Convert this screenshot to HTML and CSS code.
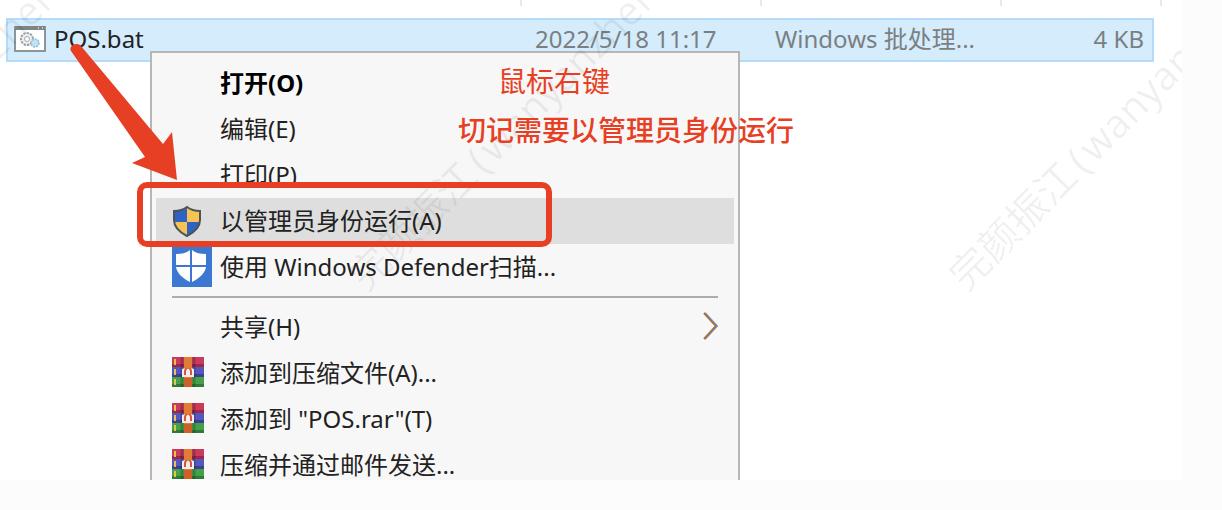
FILE: index.html
```html
<!DOCTYPE html>
<html lang="zh-CN">
<head>
<meta charset="utf-8">
<title>POS.bat</title>
<link rel="stylesheet" href="styles.css">
</head>
<body>
<svg class="defs" aria-hidden="true">
  <symbol id="rar" viewBox="0 0 32 32">
    <rect width="32" height="10" fill="#c93a5c"/><rect y="7" width="32" height="3" fill="#9c2846"/>
    <rect y="10" width="32" height="10" fill="#5457bd"/><rect y="17" width="32" height="3" fill="#3d3f92"/>
    <rect y="20" width="32" height="10" fill="#46a04a"/><rect y="27" width="32" height="3" fill="#317a36"/>
    <path d="M10 0v30M22 0v30" stroke="#000" stroke-opacity=".2" stroke-width="3"/>
    <path d="M3 2v6M3 12v6M3 22v6" stroke="#e8c548" stroke-width="2"/>
    <rect x="12" width="8" height="21" fill="#e07c35"/>
    <rect x="12" y="21" width="8" height="9" fill="#cd5f28"/>
    <path d="M10 12l3-1v3l2-2h2l2 2v-3l3 1v8H10z" fill="#f3eeee"/>
    <path d="M13 18v-4l1-3M19 18v-4l-1-3" fill="none" stroke="#d8523c" stroke-width="2"/>
  </symbol>
</svg>
<main class="shot">
  <div class="headings"><i></i><i></i><i></i><i></i></div>
  <div class="file">
    <svg class="file-icon" viewBox="0 0 32 26" aria-hidden="true">
      <rect x="1" y="1" width="30" height="24" fill="#fff" stroke="#8b9496" stroke-width="2"/>
      <path d="M1 2h30" stroke="#7d8587" stroke-width="4"/><path d="M24 2h1M28 2h1" stroke="#dfe7ea" stroke-width="1.5"/>
      <circle cx="13" cy="13" r="6" fill="#eee" stroke="#9aa0a2" stroke-width="2" stroke-dasharray="2.4 1"/>
      <circle cx="13" cy="13" r="2.5" fill="#fff" stroke="#a4aaac"/>
      <circle cx="21" cy="17" r="4" fill="#bfe2f6" stroke="#8fbddb" stroke-width="1.5" stroke-dasharray="2 1"/>
    </svg>
    <span class="name">POS.bat</span>
    <span>2022/5/18 11:17</span>
    <span>Windows 批处理...</span>
    <span class="size">4 KB</span>
  </div>
  <div class="menu">
    <button class="item default">打开(O)</button>
    <button class="item">编辑(E)</button>
    <button class="item">打印(P)</button>
    <button class="item active"><svg class="icon shield" viewBox="0 0 30 32" aria-hidden="true">
        <clipPath id="s"><path d="M15 2c4 3 8 4 13 4v9c0 7-5 12-13 16C7 27 2 22 2 15V6c5 0 9-1 13-4z"/></clipPath>
        <g clip-path="url(#s)"><path fill="#2e63c4" d="M0 0h15v17H0zM15 17h15v15H15z"/><path fill="#f7c453" d="M15 0h15v17H15zM0 17h15v15H0z"/></g>
        <path d="M15 2c4 3 8 4 13 4v9c0 7-5 12-13 16C7 27 2 22 2 15V6c5 0 9-1 13-4z" fill="none" stroke="#4b5357" stroke-width="2"/>
      </svg>以管理员身份运行(A)</button>
    <button class="item"><svg class="icon defender" viewBox="0 0 40 40" aria-hidden="true">
        <rect width="40" height="40" fill="#3c78d2"/>
        <path d="M18 3v15H4V7c6 0 10-1 14-4zM20 3v15h14V7c-6 0-10-1-14-4zM4 20h14v15C10 31 5 26 4 20zM20 20h14c-1 6-6 11-14 15z" fill="#fff"/>
      </svg>使用 Windows Defender扫描...</button>
    <hr class="rule">
    <button class="item">共享(H)<svg class="chevron" viewBox="0 0 16 28" aria-hidden="true"><path d="M3 0l12 13L3 26" fill="none" stroke="#79a7e8" stroke-width="2"/><path d="M2 0l12 13L2 26" fill="none" stroke="#a8703f" stroke-width="2"/></svg></button>
    <button class="item"><svg class="icon rar" aria-hidden="true"><use href="#rar"/></svg>添加到压缩文件(A)...</button>
    <button class="item"><svg class="icon rar" aria-hidden="true"><use href="#rar"/></svg>添加到 "POS.rar"(T)</button>
    <button class="item"><svg class="icon rar" aria-hidden="true"><use href="#rar"/></svg>压缩并通过邮件发送...</button>
  </div>
  <div class="mark mark-a">完颜振江<span>(</span>wanyanzhen</div>
  <div class="mark mark-b">完颜振江<span>(</span>wanyanzhen</div>
  <div class="mark mark-c">完颜振江<span>(</span>wanyan</div>
  <div class="note note-click">鼠标右键</div>
  <div class="note note-admin">切记需要以管理员身份运行</div>
  <div class="frame"></div>
  <svg class="arrow" viewBox="0 0 50 140" aria-hidden="true"><path d="M5 11C2 6 11 1 15 6L97 104L106 92L111 140L66 123L79 117z" fill="#e73f24"/></svg>
</main>
</body>
</html>
```
FILE: styles.css
```css
* { box-sizing: border-box; }
body {
  margin: 0;
  background: #fcfcfc;
  color: #222;
  font: 24px/32px "Noto Sans", "Noto Sans CJK SC", sans-serif;
}
.defs { position: absolute; width: 0; height: 0; }
.shot {
  position: relative;
  margin-right: 40px;
  background: #fff;
  overflow: hidden;
}
.headings {
  display: grid;
  grid-template-columns: 522px 240px 240px 160px;
  height: 18px;
}
.headings i { height: 6px; border-right: 2px solid #e8e8e8; }
.file {
  display: grid;
  grid-template-columns: 40px 481px 240px 1fr auto;
  align-items: center;
  height: 44px;
  margin: 0 28px 0 6px;
  padding: 0 8px 2px 6px;
  border: 2px solid #b2dbfc;
  background: #d4ecfc;
  color: #7c7f80;
}
.file-icon { width: 32px; height: 26px; }
.file .name { color: #222; }
.menu {
  width: 590px;
  margin: -11px 0 0 150px;
  padding: 7px 4px 0;
  border: 2px solid #b6b6b6;
  border-bottom: 0;
  background: #f7f7f7;
  position: relative;
}
.item {
  display: flex;
  align-items: center;
  position: relative;
  width: 100%;
  height: 46px;
  padding: 0 16px 0 64px;
  border: 0;
  background: none;
  color: inherit;
  font: inherit;
  text-align: left;
  white-space: pre;
}
.item:last-child { margin-bottom: -8px; }
.default { font-weight: 700; color: #000; }
.active { background: #dedede; }
.icon { position: absolute; left: 16px; }
.shield { width: 30px; height: 32px; }
.defender { width: 40px; height: 40px; }
.rar { width: 32px; height: 32px; }
.chevron { width: 16px; height: 28px; margin-left: auto; overflow: visible; }
.rule { margin: 6px 16px; border: 0; height: 2px; background: #adadad; }
.mark {
  position: absolute;
  top: 262px;
  color: rgba(0, 0, 0, .06);
  font-size: 40px;
  line-height: 40px;
  white-space: nowrap;
  transform: rotate(-45deg);
  transform-origin: 0 50%;
  pointer-events: none;
}
.mark span { margin: 0 4px 0 6px; }
.mark-a { left: -244px; }
.mark-b { left: 356px; }
.mark-c { left: 956px; }
.note { position: absolute; color: #e73f24; font-size: 28px; white-space: nowrap; }
.note-click { left: 498px; top: 65px; }
.note-admin { left: 458px; top: 114px; font-weight: 500; }
.frame {
  position: absolute;
  left: 137px;
  top: 182px;
  width: 415px;
  height: 65px;
  border: 6px solid #e73f24;
  border-radius: 10px;
}
.arrow { position: absolute; left: 66px; top: 40px; width: 50px; height: 140px; overflow: visible; }
```
